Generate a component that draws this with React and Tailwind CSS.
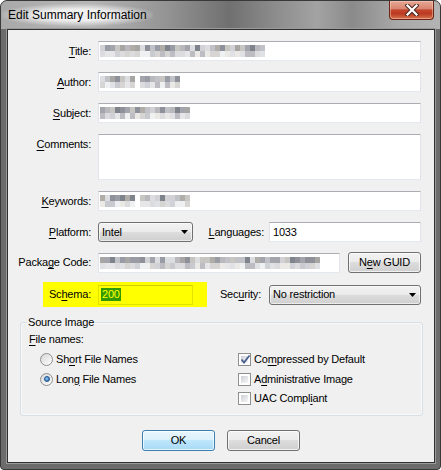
import React from 'react';

const TOP = ['bg-[#b9b9bd]', 'bg-[#a4a5ac]', 'bg-[#c8c6c3]', 'bg-[#9a9ca5]', 'bg-[#d2d2d6]', 'bg-[#b0ada9]', 'bg-[#8e919a]', 'bg-[#c1c1c8]', 'bg-[#dcdde1]', 'bg-[#a8a6a4]', 'bg-[#7f838c]'];
const BOT = ['bg-[#dcdcdf]', 'bg-[#e6e6e9]', 'bg-[#d1d2d7]', 'bg-[#ebe9e6]', 'bg-[#d6d5d4]', 'bg-[#eef0f2]', 'bg-[#c9cad0]', 'bg-[#e0e1e5]', 'bg-[#bcbcc2]'];

// pixelated (blurred-out) text
const Mosaic = ({ cells, seed, gaps = [] }) => (
    <div className="flex flex-col">
        {[TOP, BOT].map((pal, r) => (
            <div key={r} className="flex">
                {Array.from({ length: cells }, (_, i) => (
                    <div
                        key={i}
                        className={`w-[5px] h-[6px] ${gaps.includes(i) ? 'bg-white' : pal[(i * 7 + seed * 3 + r * 5 + ((i * i * 3 + seed) % 7)) % pal.length]}`}
                    />
                ))}
            </div>
        ))}
    </div>
);

const Acc = ({ text, u, colon = true }) => (
    <>
        {text.slice(0, u)}
        <span className="underline decoration-1 underline-offset-[2px]">{text[u]}</span>
        {text.slice(u + 1)}
        {colon ? ':' : ''}
    </>
);

const inputCls = 'border border-t-[#abadb3] border-x-[#e2e3ea] border-b-[#e3e9ef] bg-white flex items-center';

const Arrow = () => (
    <svg width="7" height="4" viewBox="0 0 7 4"><polygon points="0,0 7,0 3.5,4" fill="#000" /></svg>
);

const Select = ({ w, value }) => (
    <div className={`${w} h-[20px] rounded-[3px] border border-[#707070] bg-[linear-gradient(#f2f2f2_0%,#ebebeb_50%,#dddddd_50%,#cfcfcf_100%)] flex items-center justify-between pl-[3px] pr-[4px] shadow-[inset_0_0_0_1px_rgba(255,255,255,0.6)]`}>
        <span>{value}</span>
        <Arrow />
    </div>
);

const Btn = ({ children, primary }) => (
    <div className={`w-[73px] h-[21px] rounded-[3px] border flex items-center justify-center shadow-[inset_0_0_0_1px_rgba(255,255,255,0.7)] ${primary ? 'border-[#3c7fb1] bg-[linear-gradient(#eaf6fd_0%,#d9f0fc_50%,#bee6fd_50%,#a7d9f5_100%)]' : 'border-[#707070] bg-[linear-gradient(#f2f2f2_0%,#ebebeb_50%,#dddddd_50%,#cfcfcf_100%)]'}`}>
        {children}
    </div>
);

const Radio = ({ checked }) => (
    <div className="w-[13px] h-[13px] rounded-full border border-[#8e8f8f] bg-[linear-gradient(135deg,#d6d6d6,#ffffff)] flex items-center justify-center">
        {checked && <div className="w-[6px] h-[6px] rounded-full border border-[#1a4f8e] bg-[radial-gradient(circle_at_40%_40%,#8ccaf5,#1f5fa8)]" />}
    </div>
);

const Check = ({ checked }) => (
    <div className="w-[13px] h-[13px] border border-[#8e8f8f] bg-white p-[2px]">
        <div className="w-full h-full bg-[linear-gradient(135deg,#cbcfd5,#f7f7f7)] relative">
            {checked && (
                <svg className="absolute -left-[1px] -top-[2px]" width="11" height="11" viewBox="0 0 11 11">
                    <path d="M1.5 5.5 L4 8.5 L9.5 1.5" fill="none" stroke="#4a5f8f" strokeWidth="1.8" />
                </svg>
            )}
        </div>
    </div>
);

const Label = ({ children, className = '' }) => (
    <div className={`w-[83px] text-right text-[#000] ${className}`}>{children}</div>
);

export default function App() {
    return (
        <div className="w-[441px] h-[470px] flex flex-col border border-[#393939] rounded-t-[7px] rounded-b-[4px] overflow-hidden bg-[#6c6c6c] font-['Liberation_Sans',Arial,sans-serif] text-[11px] leading-[13px] tracking-[-0.2px] text-black">
            {/* title bar */}
            <div className="h-[28px] shrink-0 flex items-start justify-between bg-[linear-gradient(90deg,#a9a9a9_0%,#b6b6b6_20%,#939393_38%,#707070_52%,#8b8b8b_62%,#a3a3a3_72%,#8a8a8a_80%,#a8a8a8_90%,#b3b3b3_100%)]">
                <div className="ml-[1px] mt-[3px] px-[6px] py-[3px] rounded-full bg-[radial-gradient(ellipse_at_center,rgba(255,255,255,0.8)_35%,rgba(255,255,255,0)_75%)]">
                    <span className="text-[12px] leading-[16px] tracking-normal text-black">Edit Summary Information</span>
                </div>
                <div className="mr-[6px] w-[45px] h-[19px] rounded-b-[4px] border border-t-0 border-[#6b2516] bg-[linear-gradient(#e7a795_0%,#d98672_42%,#c4462c_50%,#bb3a22_70%,#d7724f_100%)] shadow-[inset_0_0_0_1px_rgba(255,220,200,0.45)] flex items-center justify-center">
                    <svg width="14" height="12" viewBox="0 0 14 12">
                        <path d="M2.5 1.5 L11.5 10.5 M11.5 1.5 L2.5 10.5" stroke="#4a2a22" strokeWidth="4.2" strokeLinecap="square" />
                        <path d="M2.5 1.5 L11.5 10.5 M11.5 1.5 L2.5 10.5" stroke="#ffffff" strokeWidth="2.2" strokeLinecap="square" />
                    </svg>
                </div>
            </div>

            {/* frame + client */}
            <div className="flex-1 pl-[6px] pr-[5px] pb-[6px]">
                <div className="h-full border border-[#303030] shadow-[0_0_0_1px_#9a9a9a] bg-[#f0f0f0] flex flex-col">
                    <div className="flex items-center mt-[11px]">
                        <Label><Acc text="Title" u={0} /></Label>
                        <div className={`${inputCls} ml-[7px] w-[323px] h-[20px] pl-[1px]`}>
                            <Mosaic cells={33} seed={1} />
                        </div>
                    </div>
                    <div className="flex items-center mt-[11px]">
                        <Label><Acc text="Author" u={0} /></Label>
                        <div className={`${inputCls} ml-[7px] w-[323px] h-[20px] pl-[1px]`}>
                            <Mosaic cells={16} seed={2} gaps={[7]} />
                        </div>
                    </div>
                    <div className="flex items-center mt-[11px]">
                        <Label><Acc text="Subject" u={0} /></Label>
                        <div className={`${inputCls} ml-[7px] w-[323px] h-[20px] pl-[1px]`}>
                            <Mosaic cells={18} seed={3} />
                        </div>
                    </div>
                    <div className="flex items-start mt-[11px]">
                        <Label className="pt-[4px]"><Acc text="Comments" u={0} /></Label>
                        <div className={`${inputCls} ml-[7px] w-[323px] h-[46px]`} />
                    </div>
                    <div className="flex items-center mt-[11px]">
                        <Label><Acc text="Keywords" u={0} /></Label>
                        <div className={`${inputCls} ml-[7px] w-[323px] h-[20px] pl-[1px]`}>
                            <Mosaic cells={18} seed={4} gaps={[7]} />
                        </div>
                    </div>
                    <div className="flex items-center mt-[11px]">
                        <Label><Acc text="Platform" u={0} /></Label>
                        <div className="ml-[7px]"><Select w="w-[95px]" value="Intel" /></div>
                        <div className="w-[76px] text-right pr-[5px]"><Acc text="Languages" u={0} /></div>
                        <div className={`${inputCls} w-[152px] h-[20px] pl-[3px]`}>1033</div>
                    </div>
                    <div className="flex items-center mt-[10px]">
                        <Label>Packa<span className="underline decoration-1 underline-offset-[2px]">g</span>e Code:</Label>
                        <div className={`${inputCls} ml-[7px] w-[242px] h-[20px] pl-[1px]`}>
                            <Mosaic cells={44} seed={5} />
                        </div>
                        <div className="ml-[8px]">
                            <Btn>N<span className="underline decoration-1 underline-offset-[2px]">e</span>w GUID</Btn>
                        </div>
                    </div>
                    <div className="flex items-center mt-[9px]">
                        <div className="ml-[35px] w-[164px] h-[25px] bg-[#ffff00] flex items-center">
                            <div className="w-[48px] text-right"><Acc text="Schema" u={2} /></div>
                            <div className="ml-[7px] w-[95px] h-[20px] border border-[#e3e300] border-t-[#d0d000] flex items-center pl-[2px]">
                                <span className="bg-[#339900] text-[#ffff00] px-[1px]">200</span>
                            </div>
                        </div>
                        <div className="w-[62px] text-right pr-[8px]"><Acc text="Security" u={3} /></div>
                        <Select w="w-[152px]" value="No restriction" />
                    </div>

                    {/* group box */}
                    <div className="relative mt-[15px] ml-[12px] w-[403px] h-[94px] border border-[#d5dfe5] rounded-[3px] shadow-[inset_0_0_0_1px_#ffffff80]">
                        <span className="absolute left-[6px] -top-[7px] px-[1px] bg-[#f0f0f0]">Source Image</span>
                        <div className="pt-[6px] grid grid-cols-[217px_1fr]">
                            <div className="flex flex-col">
                                <div className="h-[20px] flex items-center pl-[8px]"><Acc text="File names" u={0} /></div>
                                <div className="h-[20px] flex items-center pl-[19px] gap-[3px]">
                                    <Radio /><span>Sh<span className="underline decoration-1 underline-offset-[2px]">o</span>rt File Names</span>
                                </div>
                                <div className="h-[20px] flex items-center pl-[19px] gap-[3px]">
                                    <Radio checked /><span>Lon<span className="underline decoration-1 underline-offset-[2px]">g</span> File Names</span>
                                </div>
                            </div>
                            <div className="flex flex-col">
                                <div className="h-[20px]" />
                                <div className="h-[20px] flex items-center gap-[3px]">
                                    <Check checked /><span><Acc text="Compressed by Default" u={2} colon={false} /></span>
                                </div>
                                <div className="h-[20px] flex items-center gap-[3px]">
                                    <Check /><span><Acc text="Administrative Image" u={1} colon={false} /></span>
                                </div>
                                <div className="h-[19px] flex items-center gap-[3px]">
                                    <Check /><span><Acc text="UAC Compliant" u={9} colon={false} /></span>
                                </div>
                            </div>
                        </div>
                    </div>

                    <div className="flex justify-center gap-[12px] mt-[14px]">
                        <Btn primary>OK</Btn>
                        <Btn>Cancel</Btn>
                    </div>
                </div>
            </div>
        </div>
    );
}
